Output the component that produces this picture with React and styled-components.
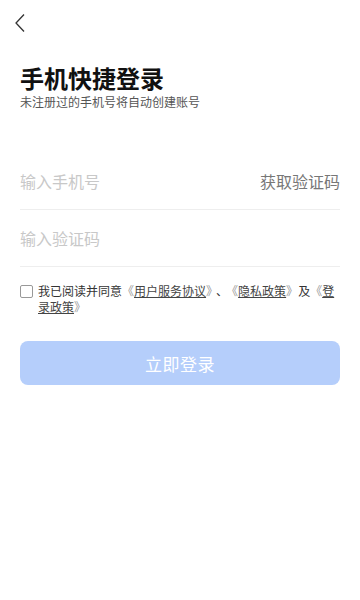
import React from "react";
import styled, { createGlobalStyle } from "styled-components";

const GlobalStyle = createGlobalStyle`
  html, body {
    margin: 0;
    padding: 0;
    background: #fff;
    font-family: "Noto Sans CJK SC", "Noto Sans", sans-serif;
  }
`;

const Page = styled.div`
  width: 360px;
  height: 600px;
  background: #fff;
  display: flex;
  flex-direction: column;
`;

const TopBar = styled.div`
  height: 48px;
  display: flex;
  align-items: center;
  padding-left: 13px;
`;

const BackButton = styled.button`
  border: none;
  background: none;
  padding: 0;
  width: 14px;
  height: 22px;
  display: flex;
  align-items: center;
  justify-content: center;
  margin-top: -2px;
`;

const Content = styled.div`
  padding: 0 20px;
  display: flex;
  flex-direction: column;
`;

const Title = styled.h1`
  margin: 14px 0 0;
  font-size: 24px;
  line-height: 32px;
  font-weight: 700;
  color: #111;
`;

const Subtitle = styled.p`
  margin: 0;
  font-size: 12px;
  line-height: 16px;
  color: #555;
`;

const Form = styled.div`
  margin-top: 43px;
  display: flex;
  flex-direction: column;
`;

const Field = styled.div`
  height: 56px;
  display: flex;
  align-items: center;
  justify-content: space-between;
  border-bottom: 1px solid #eee;
`;

const Input = styled.input`
  flex: 1;
  min-width: 0;
  border: none;
  outline: none;
  padding: 0;
  font-family: inherit;
  font-size: 16px;
  color: #333;
  background: transparent;
  &::placeholder {
    color: #c8c8c8;
  }
`;

const CodeLink = styled.span`
  font-size: 16px;
  color: #777;
`;

const Agreement = styled.label`
  margin-top: 16px;
  display: flex;
  align-items: flex-start;
  gap: 5px;
  font-size: 12px;
  line-height: 16px;
  color: #333;
`;

const Check = styled.span`
  flex: none;
  width: 11px;
  height: 11px;
  border: 1px solid #999;
  border-radius: 2px;
  margin-top: 2px;
`;

const AgreeText = styled.span`
  flex: 1;
`;

const Link = styled.span`
  text-decoration: underline;
  color: #444;
`;

const Quote = styled.span`
  color: #999;
`;

const Sep = styled.span`
  margin: 0 4px;
`;

const SubmitButton = styled.button`
  margin-top: 26px;
  height: 44px;
  border: none;
  border-radius: 8px;
  background: #b5cefb;
  color: #fff;
  font-family: inherit;
  font-size: 17px;
  letter-spacing: 0.5px;
`;

const App = () => {
  return (
    <Page>
      <GlobalStyle />
      <TopBar>
        <BackButton>
          <svg width="12" height="20" viewBox="0 0 12 20">
            <path d="M10 1.5 L2 10 L10 18.5" fill="none" stroke="#333" strokeWidth="1.3" />
          </svg>
        </BackButton>
      </TopBar>
      <Content>
        <Title>手机快捷登录</Title>
        <Subtitle>未注册过的手机号将自动创建账号</Subtitle>
        <Form>
          <Field>
            <Input placeholder="输入手机号" />
            <CodeLink>获取验证码</CodeLink>
          </Field>
          <Field>
            <Input placeholder="输入验证码" />
          </Field>
        </Form>
        <Agreement>
          <Check />
          <AgreeText>
            我已阅读并同意<Quote>《</Quote><Link>用户服务协议</Link><Quote>》</Quote><Sep>、</Sep><Quote>《</Quote><Link>隐私政策</Link><Quote>》</Quote>及<Quote>《</Quote><Link>登录政策</Link><Quote>》</Quote>
          </AgreeText>
        </Agreement>
        <SubmitButton>立即登录</SubmitButton>
      </Content>
    </Page>
  );
};

export default App;
